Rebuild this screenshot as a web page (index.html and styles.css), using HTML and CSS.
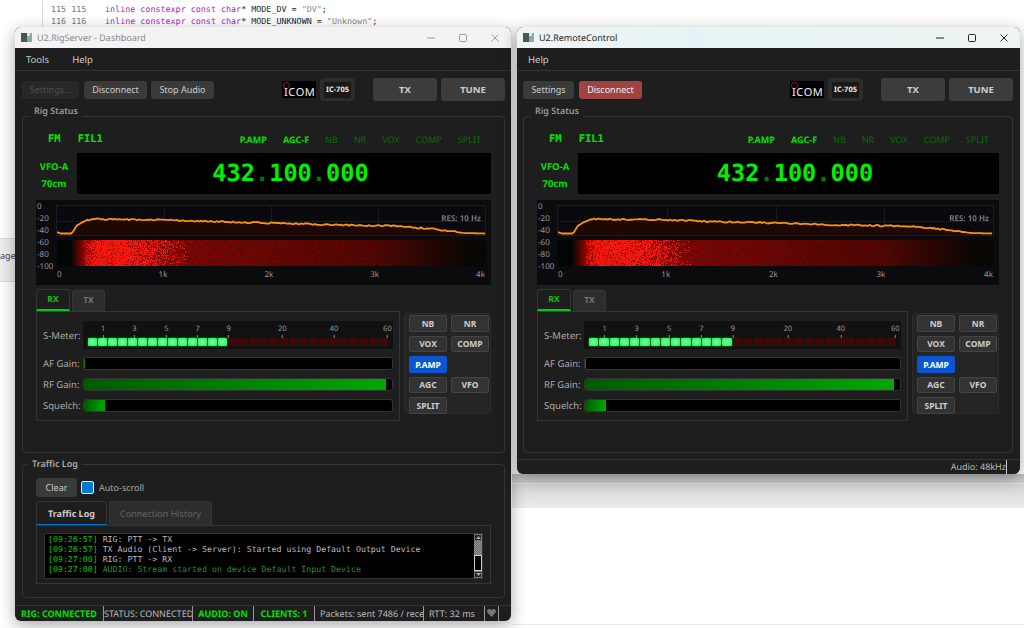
FILE: index.html
```html
<!DOCTYPE html>
<html lang="en">
<head>
  <meta charset="UTF-8">
  <meta name="viewport" content="width=device-width, initial-scale=1.0">
  <title>U2 Rig Windows</title>
  <link rel="stylesheet" href="styles.css">
</head>
<body>
  <div class="desktop">
    <!-- stuff behind the windows -->
    <div class="editor">
      <div class="code-line"><span class="line-no">115 115</span><span class="kw">inline constexpr const char</span>* MODE_DV = <span class="str">"DV"</span>;</div>
      <div class="code-line"><span class="line-no">116 116</span><span class="kw">inline constexpr const char</span>* MODE_UNKNOWN = <span class="str">"Unknown"</span>;</div>
    </div>
    <div class="side-tab">age</div>
    <div class="under-strip"></div>
    <div class="bottom-line"></div>

    <!-- server window -->
    <div class="window win-server">
      <div class="titlebar inactive">
        <span class="app-icon"><i></i><i></i></span>
        <span class="title-text">U2.RigServer - Dashboard</span>
        <span class="win-buttons">
          <svg width="10" height="10" viewBox="0 0 10 10"><path d="M1 5h8"/></svg>
          <svg width="10" height="10" viewBox="0 0 10 10"><rect x="1.5" y="1.5" width="7" height="7" rx="1"/></svg>
          <svg width="10" height="10" viewBox="0 0 10 10"><path d="M1.5 1.5l7 7M8.5 1.5l-7 7"/></svg>
        </span>
      </div>
      <div class="menubar">
        <span>Tools</span>
        <span>Help</span>
      </div>
      <div class="win-body">
        <div class="toolbar">
          <button class="btn btn-settings" disabled>Settings...</button>
          <button class="btn btn-wide">Disconnect</button>
          <button class="btn btn-wide btn-stop">Stop Audio</button>
          <div class="icom-logo"><i></i><span>ICOM</span></div>
          <div class="model-badge"><span>IC-705</span></div>
          <button class="btn-big">TX</button>
          <button class="btn-big">TUNE</button>
        </div>

        <div class="group rig-group">
          <span class="group-title">Rig Status</span>
          <div class="indicators">
            <span class="ind-mono">FM</span>
            <span class="ind-mono">FIL1</span>
            <span class="ind-on push">P.AMP</span>
            <span class="ind-on">AGC-F</span>
            <span class="ind-off">NB</span>
            <span class="ind-off">NR</span>
            <span class="ind-off">VOX</span>
            <span class="ind-off">COMP</span>
            <span class="ind-off">SPLIT</span>
          </div>
          <div class="vfo-row">
            <div class="vfo-label"><span>VFO-A</span><span>70cm</span></div>
            <div class="freq">432<b>.</b>100<b>.</b>000</div>
          </div>
          <div class="spectrum">
            <div class="y-axis"><span>0</span><span>-20</span><span>-40</span><span>-60</span><span>-80</span><span>-100</span></div>
            <div class="plots">
              <div class="plot"><canvas class="spec-line"></canvas><span class="res">RES: 10 Hz</span></div>
              <canvas class="waterfall"></canvas>
              <div class="x-axis"><span>0</span><span>1k</span><span>2k</span><span>3k</span><span>4k</span></div>
            </div>
          </div>
          <div class="controls">
            <div class="tab-col">
              <div class="tabs">
                <span class="tab tab-rx">RX</span>
                <span class="tab tab-tx">TX</span>
              </div>
              <div class="meter-pane">
                <div class="meter-row"><label>S-Meter:</label><div class="s-meter"></div></div>
                <div class="meter-row"><label>AF Gain:</label><div class="bar"><div class="bar-fill" style="width: 0.4%"></div></div></div>
                <div class="meter-row"><label>RF Gain:</label><div class="bar"><div class="bar-fill" style="width: 98%"></div></div></div>
                <div class="meter-row"><label>Squelch:</label><div class="bar"><div class="bar-fill" style="width: 6.7%"></div></div></div>
              </div>
            </div>
            <div class="func-panel">
              <button class="func">NB</button><button class="func">NR</button>
              <button class="func">VOX</button><button class="func">COMP</button>
              <button class="func func-on">P.AMP</button><span></span>
              <button class="func">AGC</button><button class="func">VFO</button>
              <button class="func">SPLIT</button>
            </div>
          </div>
        </div>

        <div class="group log-group">
          <span class="group-title">Traffic Log</span>
          <div class="log-tools">
            <button class="btn btn-clear">Clear</button>
            <span class="check"></span>
            <span class="check-label">Auto-scroll</span>
          </div>
          <div class="tabs">
            <span class="tab log-tab-on">Traffic Log</span>
            <span class="tab log-tab-off">Connection History</span>
          </div>
          <div class="log-pane">
            <div class="log-box">
              <div class="log-lines">
                <div><span class="ts">[09:26:57]</span> RIG: PTT -&gt; TX</div>
                <div><span class="ts">[09:26:57]</span> TX Audio (Client -&gt; Server): Started using Default Output Device</div>
                <div><span class="ts">[09:27:00]</span> RIG: PTT -&gt; RX</div>
                <div><span class="ts">[09:27:00]</span> <span class="log-dim">AUDIO: Stream started on device Default Input Device</span></div>
              </div>
              <div class="scrollbar">
                <span class="sb-arrow">
                  <svg width="5" height="3" viewBox="0 0 5 3"><path d="M2.5 0L5 3H0z"/></svg>
                </span>
                <span class="sb-thumb"></span>
                <span class="sb-track"></span>
                <span class="sb-arrow">
                  <svg width="5" height="3" viewBox="0 0 5 3"><path d="M0 0h5L2.5 3z"/></svg>
                </span>
              </div>
            </div>
          </div>
        </div>
      </div>
      <div class="statusbar server-status">
        <span class="cell st-green">RIG: CONNECTED</span>
        <span class="cell">STATUS: CONNECTED</span>
        <span class="cell st-green">AUDIO: ON</span>
        <span class="cell st-green">CLIENTS: 1</span>
        <span class="cell cell-left">Packets: sent 7486 / receive</span>
        <span class="cell cell-left">RTT: 32 ms</span>
        <span class="cell">
          <svg width="9" height="8" viewBox="0 0 9 8"><path d="M4.5 8L.6 3.8C-.6 2.3.5 0 2.3 0c1 0 1.7.5 2.2 1.3C5 .5 5.7 0 6.7 0c1.800 0 2.900 2.300 1.700 3.800z"/></svg>
        </span>
      </div>
    </div>

    <!-- client window -->
    <div class="window win-remote">
      <div class="titlebar active">
        <span class="app-icon"><i></i><i></i></span>
        <span class="title-text">U2.RemoteControl</span>
        <span class="win-buttons">
          <svg width="10" height="10" viewBox="0 0 10 10"><path d="M1 5h8"/></svg>
          <svg width="10" height="10" viewBox="0 0 10 10"><rect x="1.5" y="1.5" width="7" height="7" rx="1"/></svg>
          <svg width="10" height="10" viewBox="0 0 10 10"><path d="M1.5 1.5l7 7M8.5 1.5l-7 7"/></svg>
        </span>
      </div>
      <div class="menubar">
        <span>Help</span>
      </div>
      <div class="win-body">
        <div class="toolbar">
          <button class="btn btn-settings-on">Settings</button>
          <button class="btn btn-wide btn-red">Disconnect</button>
          <div class="icom-logo"><i></i><span>ICOM</span></div>
          <div class="model-badge"><span>IC-705</span></div>
          <button class="btn-big">TX</button>
          <button class="btn-big">TUNE</button>
        </div>

        <div class="group rig-group">
          <span class="group-title">Rig Status</span>
          <div class="indicators">
            <span class="ind-mono">FM</span>
            <span class="ind-mono">FIL1</span>
            <span class="ind-on push">P.AMP</span>
            <span class="ind-on">AGC-F</span>
            <span class="ind-off">NB</span>
            <span class="ind-off">NR</span>
            <span class="ind-off">VOX</span>
            <span class="ind-off">COMP</span>
            <span class="ind-off">SPLIT</span>
          </div>
          <div class="vfo-row">
            <div class="vfo-label"><span>VFO-A</span><span>70cm</span></div>
            <div class="freq">432<b>.</b>100<b>.</b>000</div>
          </div>
          <div class="spectrum">
            <div class="y-axis"><span>0</span><span>-20</span><span>-40</span><span>-60</span><span>-80</span><span>-100</span></div>
            <div class="plots">
              <div class="plot"><canvas class="spec-line"></canvas><span class="res">RES: 10 Hz</span></div>
              <canvas class="waterfall"></canvas>
              <div class="x-axis"><span>0</span><span>1k</span><span>2k</span><span>3k</span><span>4k</span></div>
            </div>
          </div>
          <div class="controls">
            <div class="tab-col">
              <div class="tabs">
                <span class="tab tab-rx">RX</span>
                <span class="tab tab-tx">TX</span>
              </div>
              <div class="meter-pane">
                <div class="meter-row"><label>S-Meter:</label><div class="s-meter"></div></div>
                <div class="meter-row"><label>AF Gain:</label><div class="bar"><div class="bar-fill" style="width: 0.4%"></div></div></div>
                <div class="meter-row"><label>RF Gain:</label><div class="bar"><div class="bar-fill" style="width: 98%"></div></div></div>
                <div class="meter-row"><label>Squelch:</label><div class="bar"><div class="bar-fill" style="width: 6.7%"></div></div></div>
              </div>
            </div>
            <div class="func-panel">
              <button class="func">NB</button><button class="func">NR</button>
              <button class="func">VOX</button><button class="func">COMP</button>
              <button class="func func-on">P.AMP</button><span></span>
              <button class="func">AGC</button><button class="func">VFO</button>
              <button class="func">SPLIT</button>
            </div>
          </div>
        </div>
      </div>
      <div class="statusbar remote-status">
        <span class="cell-audio">Audio: 48kHz</span>
      </div>
    </div>
  </div>
  <script src="app.js"></script>
</body>
</html>
```

FILE: styles.css
```css
html, body {
  margin: 0;
  padding: 0;
  width: 100%;
  height: 100%;
  overflow: hidden;
  background-color: #fff;
  font-family: "Noto Sans", Arial, sans-serif;
  font-size: 9.5px;
  color: #ccc;
  text-rendering: geometricPrecision;
}

.desktop {
  position: relative;
  width: 1024px;
  height: 628px;
  overflow: hidden;
}

/* behind the windows */
.editor {
  position: absolute;
  left: 42px;
  top: 0;
  width: 600px;
  height: 40px;
  padding-top: 3px;
  border-left: 1px solid #ddd;
  font-family: "DejaVu Sans Mono", monospace;
  font-size: 8.4px;
  color: #222;
}

.code-line {
  height: 12px;
  line-height: 12px;
  white-space: pre;
}

.line-no {
  display: inline-block;
  width: 62px;
  padding-left: 8px;
  box-sizing: border-box;
  color: #777;
}

.kw {
  color: #a626c8;
}

.str {
  color: #888;
}

.side-tab {
  position: absolute;
  left: 0;
  top: 238px;
  width: 15px;
  height: 42px;
  line-height: 34px;
  background: #eee;
  border-top: 1px solid #ddd;
  border-bottom: 1px solid #ddd;
  font-size: 9px;
  color: #445;
}

.under-strip {
  position: absolute;
  left: 512px;
  top: 474px;
  width: 512px;
  height: 34px;
  background: linear-gradient(#c0c0c0, #d8d8d8 40%, #ececec);
}

.under-strip::after {
  content: "";
  position: absolute;
  left: 0;
  right: 0;
  top: 9px;
  height: 1px;
  background: #e4e4e4;
}

.bottom-line {
  position: absolute;
  left: 512px;
  right: 0;
  top: 624px;
  height: 1px;
  background: #e8e8e8;
}

/* windows */
.window {
  position: absolute;
  display: flex;
  flex-direction: column;
  background-color: #1e1e1e;
  border-radius: 6px;
  overflow: hidden;
  box-shadow: 0 4px 16px rgba(0, 0, 0, 0.35);
}

.win-server {
  left: 15px;
  top: 27px;
  width: 496px;
  height: 594px;
}

.win-remote {
  left: 517px;
  top: 27px;
  width: 503px;
  height: 447px;
}

.titlebar {
  display: flex;
  align-items: center;
  flex: 0 0 21px;
  padding: 0 0 0 6px;
  font-size: 9px;
}

.titlebar.inactive {
  background-color: #f3f3f3;
  color: #8a8a8a;
}

.titlebar.active {
  background: linear-gradient(90deg, #f0f4f3, #e6f3f6 35%, #eef4f2);
  color: #222;
}

.app-icon {
  display: flex;
  width: 11px;
  height: 9px;
  background: #8fa8a0;
  margin-right: 5px;
}

.app-icon i:first-child {
  width: 6px;
  background: #3f5a58;
}

.app-icon i:last-child {
  width: 3px;
  height: 3px;
  background: #e5e5e5;
}

.win-buttons {
  display: flex;
  gap: 22px;
  margin-left: auto;
  margin-right: 11px;
}

.win-buttons svg {
  fill: none;
  stroke: #999;
  stroke-width: 1;
}

.active .win-buttons svg {
  stroke: #222;
}

.menubar {
  display: flex;
  gap: 23px;
  flex: 0 0 22px;
  align-items: center;
  padding-left: 11px;
  border-bottom: 1px solid #333;
  color: #ccc;
}

.win-body {
  flex: 1;
  padding: 7px 6px 0 7px;
}

.win-remote .win-body {
  padding: 7px 7px 0 6px;
}

/* toolbar */
.toolbar {
  display: flex;
  align-items: center;
  height: 23px;
}

.btn {
  height: 18px;
  padding: 0;
  border: none;
  border-radius: 3px;
  background-color: #3a3a3a;
  color: #ccc;
  font-family: inherit;
  font-size: 9px;
}

.btn-settings {
  width: 57px;
  margin-right: 5px;
  background-color: #282828;
  color: #4e4e4e;
}

.btn-settings-on {
  width: 51px;
  margin-right: 5px;
}

.btn-wide {
  width: 63px;
}

.btn-stop {
  margin-left: 4px;
}

.btn-red {
  background-color: #a04242;
  color: #eee;
}

.icom-logo {
  position: relative;
  width: 34px;
  height: 17px;
  margin-left: auto;
  background-color: #000;
}

.icom-logo i {
  position: absolute;
  left: 1px;
  top: 1px;
  width: 5px;
  height: 5px;
  border: 1px solid #a01c3c;
  border-radius: 50%;
}

.icom-logo span {
  position: absolute;
  left: 2px;
  bottom: -1px;
  color: #f4f4f4;
  font-size: 11px;
  line-height: 12px;
  letter-spacing: 0.6px;
}

.model-badge {
  display: flex;
  align-items: center;
  justify-content: center;
  width: 35px;
  height: 23px;
  margin: 0 18px 0 4px;
  background-color: #2c2c2c;
  border-radius: 4px;
}

.model-badge span {
  padding: 2px;
  background-color: #191919;
  color: #eee;
  font-size: 7.5px;
  font-weight: 700;
  line-height: 12px;
  white-space: nowrap;
}

.btn-big {
  width: 64px;
  height: 23px;
  padding: 0;
  border: none;
  border-radius: 3px;
  background-color: #3c3c3c;
  color: #ccc;
  font-family: inherit;
  font-size: 9.5px;
  font-weight: 700;
}

.btn-big:last-child {
  margin-left: 4px;
}

/* group boxes */
.group {
  position: relative;
  box-sizing: border-box;
  border: 1px solid #353535;
  border-radius: 4px;
  padding: 0 13px;
}

.group-title {
  position: absolute;
  left: 7px;
  top: -13px;
  padding: 0 4px;
  background-color: #1e1e1e;
  color: #999;
  font-size: 9px;
  font-weight: 600;
  line-height: 13px;
}

.rig-group {
  height: 337px;
  margin-top: 15px;
  padding-top: 15px;
}

.log-group {
  height: 134px;
  margin-top: 11px;
  padding-top: 13px;
}

.log-group .group-title {
  left: 5px;
  top: -8px;
  color: #aaa;
}

.indicators {
  display: flex;
  gap: 16px;
  align-items: center;
  height: 14px;
  padding: 0 10px 0 12px;
  font-size: 9px;
}

.ind-mono {
  margin-right: 1px;
  color: #00e800;
  font-family: "DejaVu Sans Mono", monospace;
  font-weight: 700;
  font-size: 10.5px;
}

.ind-on {
  color: #00e000;
  font-weight: 700;
}

.ind-off {
  color: #0a6a0a;
}

.push {
  margin-left: auto;
}

.vfo-row {
  display: flex;
  height: 41px;
  margin-top: 7px;
}

.vfo-label {
  display: flex;
  flex: 0 0 36px;
  flex-direction: column;
  align-items: center;
  justify-content: space-between;
  margin: 7px 5px 4px 0;
  color: #00e000;
  font-weight: 700;
  font-size: 9.5px;
  line-height: 13px;
}

.freq {
  flex: 1;
  padding-left: 13px;
  background-color: #000;
  color: #00f000;
  font-family: "DejaVu Sans Mono", monospace;
  font-size: 23.6px;
  font-weight: 700;
  line-height: 41px;
  text-align: center;
}

.freq b {
  color: #007c00;
}

/* spectrum */
.spectrum {
  display: flex;
  height: 85px;
  box-sizing: border-box;
  margin-top: 6px;
  padding: 6px 6px 0 0;
  background-color: #0b0b0d;
}

.y-axis {
  display: flex;
  flex: 0 0 21px;
  flex-direction: column;
  margin-top: -5px;
  color: #999;
  font-size: 8px;
  line-height: 12px;
  padding-left: 1px;
  box-sizing: border-box;
}

.plots {
  flex: 1;
  min-width: 0;
}

.plot {
  position: relative;
  height: 29px;
  outline: 1px solid #1c1c22;
}

.plot canvas,
.waterfall {
  display: block;
  width: 100%;
}

.plot canvas {
  height: 29px;
}

.waterfall {
  height: 26px;
  margin-top: 5px;
  filter: blur(0.5px);
}

.res {
  position: absolute;
  right: 4px;
  top: 7px;
  color: #777;
  font-size: 8px;
  font-weight: 700;
  line-height: 11px;
}

.x-axis {
  display: flex;
  justify-content: space-between;
  margin-top: 3px;
  color: #999;
  font-size: 8px;
  line-height: 12px;
}

/* rx controls */
.controls {
  display: flex;
  gap: 4px;
  margin-top: 4px;
}

.tab-col {
  flex: 1;
}

.tabs {
  display: flex;
  gap: 2px;
}

.tab {
  box-sizing: border-box;
  border: 1px solid #353535;
  border-bottom: none;
  border-radius: 3px 3px 0 0;
  text-align: center;
  font-weight: 700;
}

.tab-rx {
  width: 34px;
  height: 22px;
  border-bottom: 2px solid #00d000;
  color: #00c800;
  font-size: 8.5px;
  line-height: 20px;
}

.tab-tx {
  width: 33px;
  height: 21px;
  margin-top: 1px;
  background-color: #2d2d2d;
  color: #777;
  font-size: 8.5px;
  line-height: 20px;
}

.meter-pane {
  display: flex;
  flex-direction: column;
  gap: 7.5px;
  height: 110px;
  box-sizing: border-box;
  padding: 9px 6px 0;
  border: 1px solid #353535;
}

.meter-row {
  display: flex;
  align-items: center;
}

.meter-row label {
  flex: 0 0 40px;
  color: #aaa;
  font-size: 9.5px;
  white-space: nowrap;
}

.s-meter {
  position: relative;
  display: flex;
  flex: 1;
  gap: 1px;
  align-items: flex-end;
  height: 28px;
  box-sizing: border-box;
  padding: 0 5px 3px;
  background-color: #111;
}

.seg {
  flex: 1;
  height: 8px;
  border-radius: 1px;
  background-color: #3a0a0a;
}

.seg.on {
  background: radial-gradient(#7affa8, #1cf058);
  box-shadow: 0 0 2px #0d0;
}

.tick {
  position: absolute;
  top: 3px;
  transform: translateX(-50%);
  display: flex;
  flex-direction: column;
  align-items: center;
  color: #999;
  font-size: 7.5px;
  line-height: 10px;
}

.tick::after {
  content: "";
  width: 1px;
  height: 3px;
  margin-top: 1px;
  background-color: #888;
}

.bar {
  flex: 1;
  height: 13.5px;
  box-sizing: border-box;
  border: 1px solid #333;
  border-radius: 3px;
  background-color: #000;
  overflow: hidden;
}

.bar-fill {
  height: 100%;
  background: linear-gradient(90deg, #005a00, #00a800);
}

.func-panel {
  display: grid;
  grid-template-columns: 1fr 1fr;
  grid-auto-rows: 16.5px;
  gap: 4px;
  flex: 0 0 87px;
  box-sizing: border-box;
  height: 101px;
  margin-top: 24px;
  padding: 1px 1px 0 4px;
  background-color: #242424;
  border: 1px solid #2c2c2c;
  border-radius: 3px;
}

.func {
  padding: 0;
  border: 1px solid #444;
  border-radius: 2px;
  background-color: #333;
  color: #ccc;
  font-family: inherit;
  font-size: 8.5px;
  font-weight: 700;
}

.func-on {
  border-color: #0a56d0;
  background-color: #0a56d0;
  color: #fff;
}

/* traffic log */
.log-tools {
  display: flex;
  align-items: center;
  height: 19px;
}

.btn-clear {
  width: 41px;
  height: 19px;
}

.check {
  width: 11px;
  height: 11px;
  margin: 0 5px 0 4px;
  border: 1px solid #eee;
  border-radius: 2px;
  background-color: #0078d4;
}

.check-label {
  color: #aaa;
  font-size: 9px;
}

.log-group .tabs {
  margin-top: 4px;
}

.log-tab-on {
  width: 71px;
  height: 24px;
  border-bottom: 1px solid #0078d4;
  color: #ccc;
  font-size: 9px;
  line-height: 23px;
}

.log-tab-off {
  width: 103px;
  height: 24px;
  background-color: #2d2d2d;
  color: #666;
  font-size: 9px;
  font-weight: 400;
  line-height: 24px;
}

.log-pane {
  height: 59px;
  box-sizing: border-box;
  padding: 7px 7px 0;
  border: 1px solid #353535;
}

.log-box {
  display: flex;
  height: 44px;
  background-color: #000;
  border: 1px solid #333;
}

.log-lines {
  flex: 1;
  padding: 0 0 0 3px;
  font-family: "DejaVu Sans Mono", monospace;
  font-size: 8.25px;
  line-height: 10px;
  color: #bbb;
  white-space: nowrap;
}

.ts {
  color: #00c800;
}

.log-dim {
  color: #2f8a2f;
}

.scrollbar {
  display: flex;
  flex-direction: column;
  flex: 0 0 8px;
  background-color: #000;
}

.sb-arrow {
  display: flex;
  align-items: center;
  justify-content: center;
  height: 7px;
  background-color: #222;
  border: 1px solid #777;
  box-sizing: border-box;
}

.sb-arrow svg {
  fill: #aaa;
}

.sb-thumb {
  height: 14px;
  background: repeating-conic-gradient(#999 0% 25%, #666 0% 50%) 0 0 / 2px 2px;
}

.sb-track {
  flex: 1;
  border: 1px solid #ccc;
}

/* status bars */
.statusbar {
  border-top: 1px solid #333;
}

.server-status {
  display: grid;
  grid-template-columns: 89px 89px 61px 61px 109px 61px 14px;
  height: 15px;
  font-size: 9px;
  line-height: 15px;
  color: #bbb;
  white-space: nowrap;
}

.cell {
  display: block;
  overflow: hidden;
  box-sizing: border-box;
  border-right: 1px solid #999;
  text-align: center;
}

.cell svg {
  fill: #777;
}

.cell-left {
  padding-left: 5px;
  text-align: left;
}

.st-green {
  color: #00e000;
  font-weight: 700;
}

.remote-status {
  display: flex;
  justify-content: flex-end;
  height: 14px;
  padding-right: 13px;
  font-size: 9px;
  line-height: 14px;
  color: #bbb;
}

.cell-audio {
  border-right: 1px solid #ccc;
}
```

FILE: app.js
```js
// small repeatable random so both windows look the same each run
function makeRandom(seed) {
  let s = seed;
  return function () {
    s = (s * 16807) % 2147483647;
    return s / 2147483647;
  };
}

// [fraction of width, y in px] for the spectrum curve
const curve = [
  [0, 26], [0.008, 27.5], [0.035, 27.5], [0.045, 20], [0.06, 16], [0.08, 13],
  [0.15, 13.5], [0.25, 14], [0.35, 15.5], [0.5, 17], [0.65, 19], [0.8, 20],
  [0.85, 22], [0.9, 24], [0.95, 27], [1, 27.5]
];

function curveY(f) {
  for (let i = 1; i < curve.length; i++) {
    if (f <= curve[i][0]) {
      const a = curve[i - 1];
      const b = curve[i];
      return a[1] + (b[1] - a[1]) * (f - a[0]) / (b[0] - a[0]);
    }
  }
  return 27.5;
}

function drawSpectrum(canvas, seed) {
  const w = canvas.clientWidth;
  const h = canvas.clientHeight;
  canvas.width = w;
  canvas.height = h;
  const ctx = canvas.getContext("2d");
  const rnd = makeRandom(seed);

  // grid
  ctx.fillStyle = "#0a0a0e";
  ctx.fillRect(0, 0, w, h);
  ctx.fillStyle = "#1a1a1f";
  for (let i = 1; i < 4; i++) {
    ctx.fillRect(Math.round(w * i / 4), 0, 1, h);
  }
  ctx.fillRect(0, Math.round(h / 2), w, 1);

  const points = [];
  for (let x = 0; x <= w; x += 2) {
    const f = x / w;
    const wobble = f > 0.07 && f < 0.93 ? (rnd() - 0.5) * 1.4 : 0;
    points.push([x, curveY(f) + wobble]);
  }

  ctx.beginPath();
  ctx.moveTo(0, h);
  points.forEach(function (p) { ctx.lineTo(p[0], p[1]); });
  ctx.lineTo(w, h);
  ctx.closePath();
  ctx.fillStyle = "#1e0804";
  ctx.fill();

  ctx.beginPath();
  points.forEach(function (p, i) {
    if (i === 0) ctx.moveTo(p[0], p[1]);
    else ctx.lineTo(p[0], p[1]);
  });
  ctx.strokeStyle = "#f89410";
  ctx.lineWidth = 1.8;
  ctx.stroke();
}

function drawWaterfall(canvas, seed) {
  const w = canvas.clientWidth;
  const h = canvas.clientHeight;
  canvas.width = w;
  canvas.height = h;
  const ctx = canvas.getContext("2d");
  const rnd = makeRandom(seed);
  const img = ctx.createImageData(w, h);

  for (let y = 0; y < h; y++) {
    for (let x = 0; x < w; x++) {
      const f = x / w;
      let base;
      if (f < 0.03) base = 0;
      else if (f < 0.065) base = (f - 0.03) / 0.035 * 150;
      else if (f < 0.3) base = 170 - (f - 0.065) * 220;
      else if (f < 0.75) base = 118 - (f - 0.3) * 90;
      else if (f < 0.96) base = 78 - (f - 0.75) * 330;
      else base = 8;

      // chance of a hot pixel falls away with frequency
      let hot = 0;
      if (f > 0.06 && f < 0.09) hot = (f - 0.06) / 0.03 * 0.85;
      else if (f >= 0.09) hot = f < 0.17 ? 0.85 : Math.max(0, 0.85 - (f - 0.17) * 6);
      const r = rnd();
      const red = r < hot ? 225 + rnd() * 30 : base * (0.85 + rnd() * 0.3);
      const i = (y * w + x) * 4;
      img.data[i] = red;
      img.data[i + 1] = r < hot ? 24 : 6;
      img.data[i + 2] = r < hot ? 14 : 3;
      img.data[i + 3] = 255;
    }
  }
  ctx.putImageData(img, 0, 0);
}

function buildMeter(meter) {
  const lit = 14;
  for (let i = 0; i < 30; i++) {
    const seg = document.createElement("div");
    seg.className = i < lit ? "seg on" : "seg";
    meter.appendChild(seg);
  }
  const ticks = [["1", 6.5], ["3", 16.6], ["5", 26.9], ["7", 37], ["9", 47], ["20", 64.3], ["40", 81], ["60", 98.2]];
  ticks.forEach(function (t) {
    const tick = document.createElement("span");
    tick.className = "tick";
    tick.textContent = t[0];
    tick.style.left = t[1] + "%";
    meter.appendChild(tick);
  });
}

document.querySelectorAll(".spec-line").forEach(function (c, i) { drawSpectrum(c, 4211 + i * 97); });
document.querySelectorAll(".waterfall").forEach(function (c, i) { drawWaterfall(c, 9137 + i * 131); });
document.querySelectorAll(".s-meter").forEach(buildMeter);
```
